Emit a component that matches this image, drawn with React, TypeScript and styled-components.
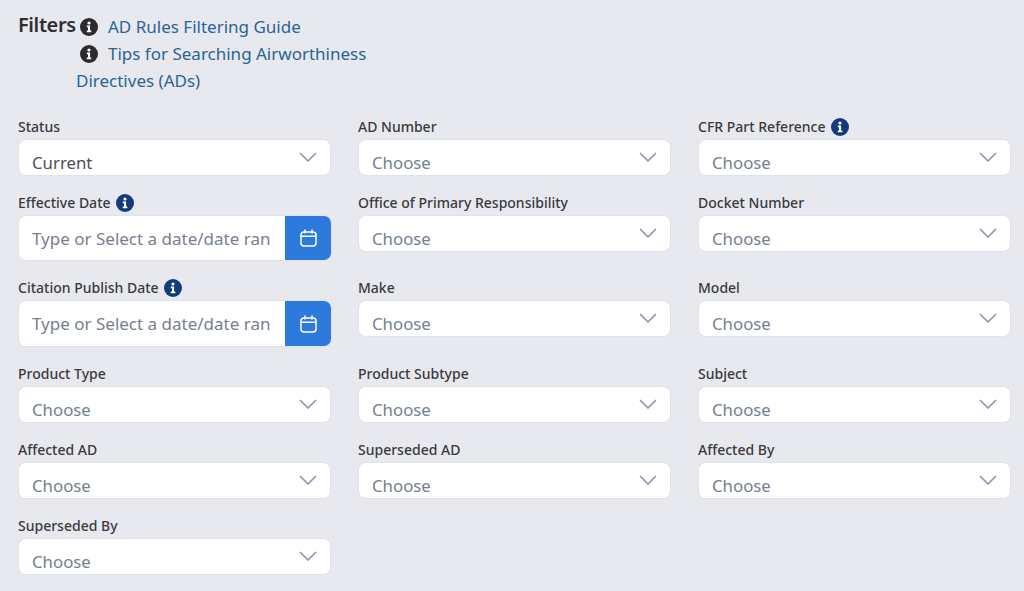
import React from 'react';
import styled, { createGlobalStyle } from 'styled-components';

const GlobalStyle = createGlobalStyle`
  html, body {
    margin: 0;
    padding: 0;
    background: #e8e9ee;
    font-family: "Noto Sans", "Open Sans", sans-serif;
  }
`;

const InfoIcon: React.FC<{ size: number; color: string }> = ({ size, color }) => (
  <svg width={size} height={size} viewBox="0 0 18 18" aria-hidden="true">
    <circle cx="9" cy="9" r="9" fill={color} />
    <circle cx="9" cy="5" r="1.6" fill="#fff" />
    <path d="M6.8 7.6h3.3v5h1.2v1.6H6.8v-1.6H8v-3.4H6.8z" fill="#fff" />
  </svg>
);

const Chevron = () => (
  <svg width="18" height="11" viewBox="0 0 18 11" fill="none" aria-hidden="true">
    <path d="M1.5 1.5 9 9l7.5-7.5" stroke="#8c97ad" strokeWidth="1.7" strokeLinecap="round" strokeLinejoin="round" />
  </svg>
);

const CalendarIcon = () => (
  <svg width="17" height="18" viewBox="0 0 17 18" fill="none" aria-hidden="true">
    <rect x="1" y="3" width="15" height="14" rx="3" stroke="#fff" strokeWidth="1.5" />
    <path d="M1 7.2h15M5 1v3M12 1v3" stroke="#fff" strokeWidth="1.5" strokeLinecap="round" />
  </svg>
);

type Filter = {
  label: string;
  kind?: 'select' | 'date';
  value?: string;
  info?: boolean;
};

const filters: Filter[] = [
  { label: 'Status', value: 'Current' },
  { label: 'AD Number' },
  { label: 'CFR Part Reference', info: true },
  { label: 'Effective Date', kind: 'date', info: true },
  { label: 'Office of Primary Responsibility' },
  { label: 'Docket Number' },
  { label: 'Citation Publish Date', kind: 'date', info: true },
  { label: 'Make' },
  { label: 'Model' },
  { label: 'Product Type' },
  { label: 'Product Subtype' },
  { label: 'Subject' },
  { label: 'Affected AD' },
  { label: 'Superseded AD' },
  { label: 'Affected By' },
  { label: 'Superseded By' },
];

const App: React.FC = () => (
  <Page>
    <GlobalStyle />
    <Header>
      <Title>Filters</Title>
      <Guides>
        <GuideLink>
          <IconSlot><InfoIcon size={18} color="#2b2b2e" /></IconSlot>
          AD Rules Filtering Guide
        </GuideLink>
        <GuideLink>
          <IconSlot><InfoIcon size={18} color="#2b2b2e" /></IconSlot>
          Tips for Searching Airworthiness
        </GuideLink>
        <GuideWrap>Directives (ADs)</GuideWrap>
      </Guides>
    </Header>
    <Grid>
      {filters.map((f) => (
        <Field key={f.label}>
          <Label>
            {f.label}
            {f.info && <InfoIcon size={18} color="#123a7c" />}
          </Label>
          {f.kind === 'date' ? (
            <DateBox>
              <DateText>Type or Select a date/date ran</DateText>
              <DateButton><CalendarIcon /></DateButton>
            </DateBox>
          ) : (
            <SelectBox>
              <SelectText $filled={!!f.value}>{f.value ?? 'Choose'}</SelectText>
              <ChevronSlot><Chevron /></ChevronSlot>
            </SelectBox>
          )}
        </Field>
      ))}
    </Grid>
  </Page>
);

export default App;

const Page = styled.div`
  box-sizing: border-box;
  width: 1024px;
  height: 591px;
  padding: 13px 13px 0 18px;
  background: #e8e9ee;
  overflow: hidden;
`;

const Header = styled.div`
  display: flex;
  align-items: flex-start;
  height: 106px;
`;

const Title = styled.h2`
  margin: -2px 0 0;
  font-size: 20px;
  line-height: 27px;
  font-weight: 600;
  color: #2f2f33;
  width: 58px;
  letter-spacing: -0.4px;
`;

const Guides = styled.div`
  display: flex;
  flex-direction: column;
`;

const GuideLink = styled.a`
  display: flex;
  align-items: center;
  height: 27px;
  font-size: 17px;
  color: #2a6496;
`;

const GuideWrap = styled.a`
  height: 27px;
  line-height: 27px;
  font-size: 17px;
  color: #2a6496;
`;

const IconSlot = styled.span`
  display: flex;
  width: 32px;
  padding-left: 4px;
  box-sizing: border-box;
`;

const Grid = styled.div`
  display: grid;
  grid-template-columns: repeat(3, 313px);
  column-gap: 27px;
  row-gap: 19px;
  align-items: start;
`;

const Field = styled.div`
  display: flex;
  flex-direction: column;
`;

const Label = styled.label`
  box-sizing: border-box;
  display: flex;
  align-items: center;
  gap: 5px;
  height: 20px;
  padding-bottom: 5px;
  font-size: 14px;
  font-weight: 500;
  color: #3a3a3e;
`;

const SelectBox = styled.div`
  position: relative;
  box-sizing: border-box;
  height: 37px;
  background: #fff;
  border: 1px solid #dfe2ea;
  border-radius: 8px;
  padding: 12px 13px 0;
  overflow: hidden;
`;

const SelectText = styled.span<{ $filled: boolean }>`
  display: block;
  font-size: 16.8px;
  line-height: 22px;
  color: ${(p) => (p.$filled ? '#4a4f5a' : '#76808f')};
`;

const ChevronSlot = styled.span`
  position: absolute;
  right: 13px;
  top: 12px;
  display: flex;
`;

const DateBox = styled.div`
  display: flex;
  width: calc(100% + 1px);
  height: 46.4px;
  box-sizing: border-box;
  border-radius: 8px;
  overflow: hidden;
  background: #fff;
  border: 1px solid #dfe2ea;
`;

const DateText = styled.div`
  flex: 1;
  min-width: 0;
  padding: 0 13px;
  font-size: 17px;
  line-height: 46px;
  color: #76808f;
  white-space: nowrap;
`;

const DateButton = styled.div`
  width: 46px;
  flex: none;
  display: flex;
  align-items: center;
  justify-content: center;
  background: #2d7ade;
`;
